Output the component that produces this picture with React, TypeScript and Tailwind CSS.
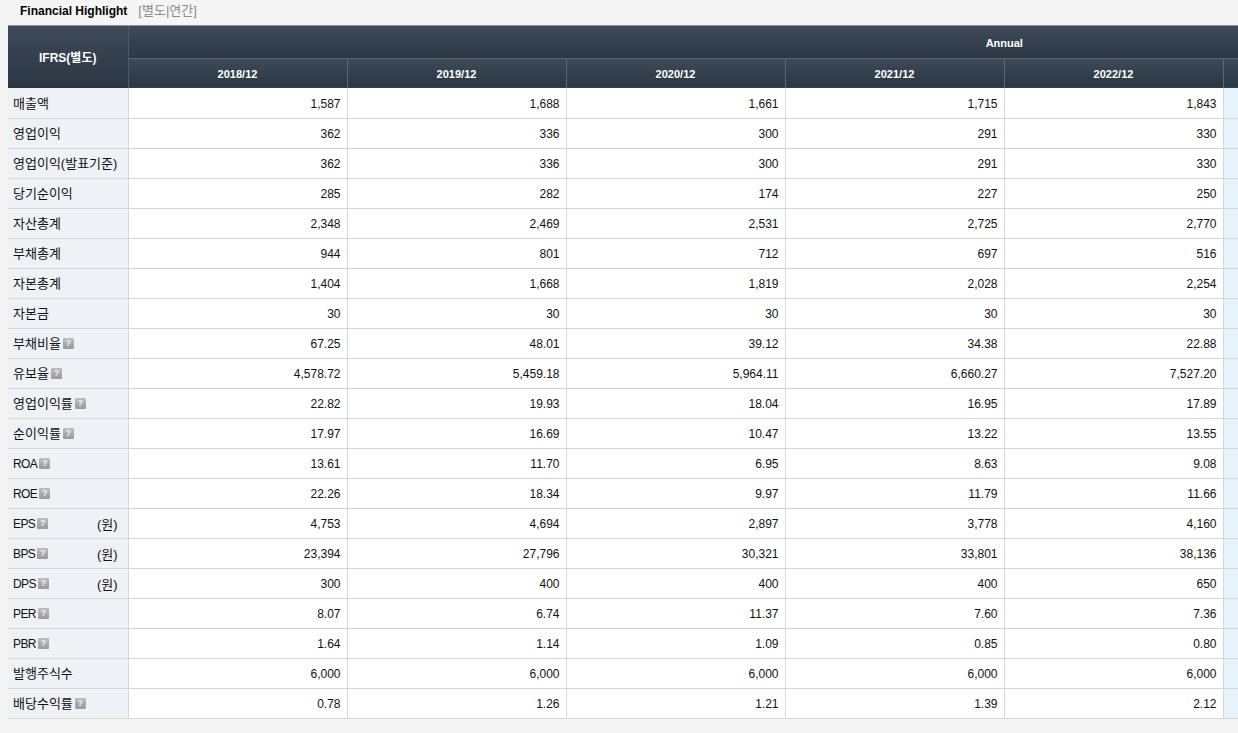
const years = ["2018/12", "2019/12", "2020/12", "2021/12", "2022/12", "", "", ""];

type Row = { label: string; latin?: boolean; help?: boolean; unit?: string; values: string[] };

const rows: Row[] = [
  { label: "매출액", values: ["1,587", "1,688", "1,661", "1,715", "1,843"] },
  { label: "영업이익", values: ["362", "336", "300", "291", "330"] },
  { label: "영업이익(발표기준)", values: ["362", "336", "300", "291", "330"] },
  { label: "당기순이익", values: ["285", "282", "174", "227", "250"] },
  { label: "자산총계", values: ["2,348", "2,469", "2,531", "2,725", "2,770"] },
  { label: "부채총계", values: ["944", "801", "712", "697", "516"] },
  { label: "자본총계", values: ["1,404", "1,668", "1,819", "2,028", "2,254"] },
  { label: "자본금", values: ["30", "30", "30", "30", "30"] },
  { label: "부채비율", help: true, values: ["67.25", "48.01", "39.12", "34.38", "22.88"] },
  { label: "유보율", help: true, values: ["4,578.72", "5,459.18", "5,964.11", "6,660.27", "7,527.20"] },
  { label: "영업이익률", help: true, values: ["22.82", "19.93", "18.04", "16.95", "17.89"] },
  { label: "순이익률", help: true, values: ["17.97", "16.69", "10.47", "13.22", "13.55"] },
  { label: "ROA", latin: true, help: true, values: ["13.61", "11.70", "6.95", "8.63", "9.08"] },
  { label: "ROE", latin: true, help: true, values: ["22.26", "18.34", "9.97", "11.79", "11.66"] },
  { label: "EPS", latin: true, help: true, unit: "(원)", values: ["4,753", "4,694", "2,897", "3,778", "4,160"] },
  { label: "BPS", latin: true, help: true, unit: "(원)", values: ["23,394", "27,796", "30,321", "33,801", "38,136"] },
  { label: "DPS", latin: true, help: true, unit: "(원)", values: ["300", "400", "400", "400", "650"] },
  { label: "PER", latin: true, help: true, values: ["8.07", "6.74", "11.37", "7.60", "7.36"] },
  { label: "PBR", latin: true, help: true, values: ["1.64", "1.14", "1.09", "0.85", "0.80"] },
  { label: "발행주식수", values: ["6,000", "6,000", "6,000", "6,000", "6,000"] },
  { label: "배당수익률", help: true, values: ["0.78", "1.26", "1.21", "1.39", "2.12"] },
];

function HelpIcon() {
  return (
    <span className="ml-[2px] inline-flex h-[11px] w-[11px] items-center justify-center rounded-[1px] bg-gradient-to-b from-[#bdbdbd] to-[#9a9a9a] text-[9px] font-bold leading-none text-[#f2f2f2]">
      ?
    </span>
  );
}

export default function App() {
  return (
    <div
      className="min-h-[733px] w-[1238px] overflow-hidden bg-[#f5f5f5] text-[12px] text-[#111]"
      style={{ fontFamily: '"Liberation Sans", "Noto Sans CJK KR", sans-serif' }}
    >
      <div className="flex h-[25px] items-center pb-[3px] pl-[20px]">
        <span className="text-[12px] font-bold text-black">Financial Highlight</span>
        <span className="ml-[11px] text-[13px] text-[#8a8a8a]">[별도|연간]</span>
      </div>
      <div className="ml-[8px] overflow-hidden border-t border-[#8a9099]">
        <table className="w-[1872px] table-fixed border-collapse">
          <colgroup>
            <col className="w-[120px]" />
            {years.map((y, i) => (
              <col key={i} className="w-[219px]" />
            ))}
          </colgroup>
          <thead>
            <tr className="h-[32px]">
              <th
                rowSpan={2}
                className="border-r border-[#4f5b69] bg-gradient-to-b from-[#3e4a58] to-[#2a3643] pt-[2px] text-[12px] font-bold text-white"
              >
                IFRS(별도)
              </th>
              <th
                colSpan={8}
                className="border-b border-[#5b6776] bg-gradient-to-b from-[#3f4b59] to-[#2b3744] pt-[2px] text-[11px] font-bold text-white"
              >
                Annual
              </th>
            </tr>
            <tr className="h-[30px]">
              {years.map((y, i) => (
                <th
                  key={i}
                  className="border-r border-[#5b6776] bg-gradient-to-b from-[#3e4a58] to-[#2a3643] pt-[2px] text-[11px] font-bold text-white"
                >
                  {y}
                </th>
              ))}
            </tr>
          </thead>
          <tbody>
            {rows.map((r) => (
              <tr key={r.label} className="h-[30px]">
                <td className="border-b border-r border-[#d6d6d6] bg-[#eef2f7] pl-[5px] pr-[10px] pt-[1px]">
                  <div className="flex items-center">
                    <span className={r.latin ? "text-[12px] tracking-[-0.6px]" : "text-[13px]"}>{r.label}</span>
                    {r.help && <HelpIcon />}
                    {r.unit && <span className="ml-auto pt-[3px] text-[13px]">{r.unit}</span>}
                  </div>
                </td>
                {years.map((y, i) => (
                  <td
                    key={i}
                    className={
                      i < 5
                        ? "border-b border-r border-[#d6d6d6] bg-white pr-[6px] pt-[2px] text-right"
                        : "border-b border-r border-[#d6d6d6] bg-[#e6f3fa] pr-[6px] pt-[2px] text-right"
                    }
                  >
                    {r.values[i] ?? ""}
                  </td>
                ))}
              </tr>
            ))}
          </tbody>
        </table>
      </div>
    </div>
  );
}
